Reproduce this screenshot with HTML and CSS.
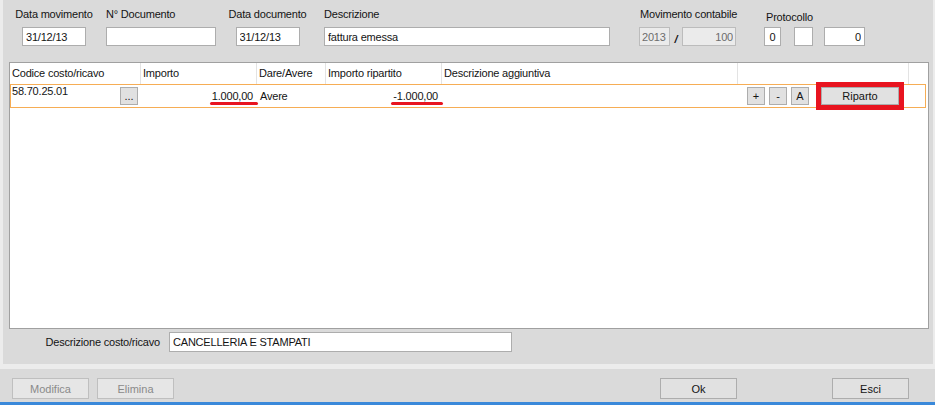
FILE: index.html
```html
<!DOCTYPE html>
<html lang="it">
<head>
  <meta charset="UTF-8">
  <title>Ripartizione costo/ricavo</title>
  <link rel="stylesheet" href="styles.css">
</head>
<body>
  <div class="panel">
    <div class="top-fields">
      <div class="field centered f-datamov">
        <label>Data movimento</label>
        <input class="fld w-date" value="31/12/13">
      </div>
      <div class="field f-ndoc">
        <label>N° Documento</label>
        <input class="fld w-ndoc" value="">
      </div>
      <div class="field centered f-datadoc">
        <label>Data documento</label>
        <input class="fld w-date" value="31/12/13">
      </div>
      <div class="field f-descr">
        <label>Descrizione</label>
        <input class="fld w-descr" value="fattura emessa">
      </div>
      <div class="field f-movcont">
        <label>Movimento contabile</label>
        <div class="inline">
          <input class="fld w-anno" value="2013" disabled>
          <span class="slash">/</span>
          <input class="fld w-num right" value="100" disabled>
        </div>
      </div>
      <div class="field f-prot">
        <label>Protocollo</label>
        <div class="inline prot">
          <input class="fld w-p1 center" value="0">
          <input class="fld w-p2" value="">
          <input class="fld w-p3 right" value="0">
        </div>
      </div>
    </div>

    <div class="grid-box">
      <div class="grid-head">
        <div class="hcell">Codice costo/ricavo</div>
        <div class="hcell">Importo</div>
        <div class="hcell">Dare/Avere</div>
        <div class="hcell">Importo ripartito</div>
        <div class="hcell">Descrizione aggiuntiva</div>
        <div class="hcell"></div>
        <div class="hcell last"></div>
      </div>
      <div class="grid-row">
        <div class="c-code">
          <span>58.70.25.01</span>
          <button class="sbtn dots">...</button>
        </div>
        <div class="c-num"><span class="mark">1.000,00</span></div>
        <div class="c-text">Avere</div>
        <div class="c-num"><span class="mark">-1.000,00</span></div>
        <div class="c-text"></div>
        <div class="c-actions">
          <button class="sbtn">+</button>
          <button class="sbtn">-</button>
          <button class="sbtn">A</button>
          <button class="btn-riparto">Riparto</button>
        </div>
        <div></div>
      </div>
    </div>

    <div class="desc-row">
      <label>Descrizione costo/ricavo</label>
      <input class="fld w-desccr" value="CANCELLERIA E STAMPATI">
    </div>
  </div>

  <div class="footer">
    <button class="fbtn" disabled>Modifica</button>
    <button class="fbtn elimina" disabled>Elimina</button>
    <button class="fbtn ok">Ok</button>
    <button class="fbtn esci">Esci</button>
  </div>
</body>
</html>
```

FILE: styles.css
```css
* {
  box-sizing: border-box;
}

body {
  margin: 0;
  height: 405px;
  overflow: hidden;
  background: #ececec;
  font-family: "Liberation Sans", Arial, sans-serif;
  font-size: 11px;
  letter-spacing: -0.2px;
  color: #141414;
}

.panel {
  margin: 0 2px 0 3px;
  padding: 8px 0 12px 0;
  background: #dadada;
}

/* campi in alto */
.top-fields {
  display: flex;
  align-items: flex-start;
}

.field {
  display: flex;
  flex-direction: column;
  align-items: flex-start;
  gap: 6px;
}
.field.centered {
  align-items: center;
}
.field label {
  line-height: 13px;
  white-space: nowrap;
}

.f-datamov { margin-left: 13px; width: 76px; }
.f-ndoc    { margin-left: 14px; width: 110px; }
.f-datadoc { margin-left: 13px; width: 77px; }
.f-descr   { margin-left: 18px; width: 286px; }
.f-movcont { margin-left: 29px; width: 98px; }
.f-movcont label { padding-left: 1px; }
.f-prot    { margin-left: 27px; gap: 3px; }
.f-prot label { margin-top: 3px; padding-left: 2px; }

.fld {
  height: 19px;
  margin: 0;
  padding: 0 3px;
  border: 1px solid #adadad;
  background: #fff;
  font: inherit;
  letter-spacing: inherit;
  color: #141414;
  outline: none;
}
.fld:disabled {
  background: #ebebeb;
  border-color: #bcbcbc;
  color: #6d6d6d;
  padding: 0 2px;
}
.fld.right { text-align: right; }
.fld.center { text-align: center; padding: 0; }

.w-date   { width: 64px; }
.w-ndoc   { width: 110px; }
.w-descr  { width: 286px; }
.w-anno   { width: 31px; }
.w-num    { width: 54px; }
.w-p1     { width: 17px; }
.w-p2     { width: 19px; }
.w-p3     { width: 41px; }
.w-desccr { width: 343px; height: 20px; }

.inline {
  display: flex;
  align-items: center;
}
.slash {
  width: 12px;
  text-align: center;
  font-weight: bold;
  font-style: italic;
  padding-top: 4px;
}
.prot .w-p2 { margin-left: 13px; }
.prot .w-p3 { margin-left: 11px; }

/* griglia */
.grid-box {
  margin: 16px 4px 0 6px;
  height: 267px;
  background: #fff;
  border: 1px solid #a0a0a0;
}

.grid-head {
  display: grid;
  grid-template-columns: 131px 116px 69px 116px 296px 171px 1fr;
  height: 21px;
}
.hcell {
  line-height: 21px;
  padding-left: 2px;
  border-right: 1px solid #e3e3e3;
  white-space: nowrap;
}
.hcell.last {
  border-right: none;
}

.grid-row {
  display: grid;
  grid-template-columns: 130px 116px 69px 116px 296px 171px 1fr;
  height: 24px;
  margin-right: 2px;
  border: 1px solid #f6ad55;
}

.c-code {
  display: flex;
  justify-content: space-between;
  align-items: center;
  padding: 0 3px 0 1px;
}
.c-code span {
  align-self: flex-start;
  line-height: 13px;
}

.c-num,
.c-text {
  align-self: end;
  line-height: 13px;
  padding-bottom: 4px;
  white-space: nowrap;
}
.c-num {
  text-align: right;
  padding-right: 4px;
}
.c-text {
  padding-left: 3px;
}

.mark {
  position: relative;
}
.mark::after {
  content: "";
  position: absolute;
  left: -2px;
  right: -5px;
  top: 12px;
  height: 3px;
  border-radius: 2px;
  background: #e8141f;
}

.c-actions {
  display: flex;
  align-items: center;
  padding-left: 9px;
  gap: 4px;
}

.sbtn {
  width: 18px;
  height: 18px;
  padding: 0;
  border: 1px solid #adadad;
  background: #e1e1e1;
  font: inherit;
  letter-spacing: 0;
  color: #141414;
  line-height: 14px;
}
.sbtn.dots {
  width: 18px;
  line-height: 12px;
}

.btn-riparto {
  margin-left: 8px;
  width: 78px;
  height: 18px;
  padding: 0;
  border: 1px solid #adadad;
  background: #e1e1e1;
  font: inherit;
  color: #141414;
  outline: 5px solid #e8141f;
}

/* riga descrizione */
.desc-row {
  display: flex;
  align-items: center;
  gap: 9px;
  margin-top: 3px;
}
.desc-row label {
  width: 157px;
  text-align: right;
  white-space: nowrap;
}

/* pulsanti in basso */
.footer {
  display: flex;
  align-items: flex-start;
  margin-top: 5px;
  height: 36px;
  padding: 9px 26px 0 12px;
  background: #dadada;
  border-bottom: 3px solid #3a89da;
}

.fbtn {
  width: 77px;
  height: 21px;
  padding: 0;
  border: 1px solid #adadad;
  background: #e1e1e1;
  font: inherit;
  color: #141414;
}
.fbtn:disabled {
  border-color: #bfbfbf;
  background: #e6e6e6;
  color: #8a8a8a;
}
.fbtn.elimina { margin-left: 8px; }
.fbtn.ok      { margin-left: auto; }
.fbtn.esci    { margin-left: 95px; }
```
